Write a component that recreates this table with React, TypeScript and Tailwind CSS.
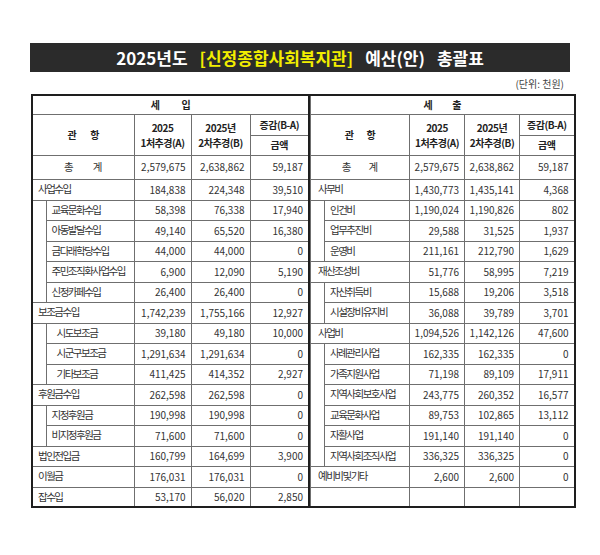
type Row = {
  label: string
  a: string
  b: string
  d: string
  sub?: boolean
  pad?: string
}

const income: Row[] = [
  { label: '사업수입', a: '184,838', b: '224,348', d: '39,510' },
  { label: '교육문화수입', a: '58,398', b: '76,338', d: '17,940', sub: true },
  { label: '아동발달수입', a: '49,140', b: '65,520', d: '16,380', sub: true },
  { label: '금다래학당수입', a: '44,000', b: '44,000', d: '0', sub: true },
  { label: '주민조직화사업수입', a: '6,900', b: '12,090', d: '5,190', sub: true },
  { label: '신정카페수입', a: '26,400', b: '26,400', d: '0', sub: true },
  { label: '보조금수입', a: '1,742,239', b: '1,755,166', d: '12,927' },
  { label: '시도보조금', a: '39,180', b: '49,180', d: '10,000', sub: true, pad: 'pl-[10px]' },
  { label: '시군구보조금', a: '1,291,634', b: '1,291,634', d: '0', sub: true, pad: 'pl-[10px]' },
  { label: '기타보조금', a: '411,425', b: '414,352', d: '2,927', sub: true, pad: 'pl-[10px]' },
  { label: '후원금수입', a: '262,598', b: '262,598', d: '0' },
  { label: '지정후원금', a: '190,998', b: '190,998', d: '0', sub: true },
  { label: '비지정후원금', a: '71,600', b: '71,600', d: '0', sub: true },
  { label: '법인전입금', a: '160,799', b: '164,699', d: '3,900' },
  { label: '이월금', a: '176,031', b: '176,031', d: '0' },
  { label: '잡수입', a: '53,170', b: '56,020', d: '2,850' },
]

const expense: Row[] = [
  { label: '사무비', a: '1,430,773', b: '1,435,141', d: '4,368' },
  { label: '인건비', a: '1,190,024', b: '1,190,826', d: '802', sub: true },
  { label: '업무추진비', a: '29,588', b: '31,525', d: '1,937', sub: true },
  { label: '운영비', a: '211,161', b: '212,790', d: '1,629', sub: true },
  { label: '재산조성비', a: '51,776', b: '58,995', d: '7,219' },
  { label: '자산취득비', a: '15,688', b: '19,206', d: '3,518', sub: true },
  { label: '시설장비유지비', a: '36,088', b: '39,789', d: '3,701', sub: true },
  { label: '사업비', a: '1,094,526', b: '1,142,126', d: '47,600' },
  { label: '사례관리사업', a: '162,335', b: '162,335', d: '0', sub: true },
  { label: '가족지원사업', a: '71,198', b: '89,109', d: '17,911', sub: true },
  { label: '지역사회보호사업', a: '243,775', b: '260,352', d: '16,577', sub: true },
  { label: '교육문화사업', a: '89,753', b: '102,865', d: '13,112', sub: true },
  { label: '자활사업', a: '191,140', b: '191,140', d: '0', sub: true },
  { label: '지역사회조직사업', a: '336,325', b: '336,325', d: '0', sub: true },
  { label: '예비비및기타', a: '2,600', b: '2,600', d: '0' },
  { label: '\u00a0', a: '\u00a0', b: '\u00a0', d: '\u00a0' },
]

const cell = 'border border-[#6f6f6f] px-0 align-middle'
const num = `${cell} text-right pr-[5px]`
const label = 'text-[10.5px] tracking-[-1.5px] whitespace-nowrap'
const head = `${cell} font-bold text-center tracking-[-0.5px] text-[#222]`

function Spread({ a, b, gap }: { a: string; b: string; gap: string }) {
  return (
    <div className={`flex justify-center ${gap}`}>
      <span>{a}</span>
      <span>{b}</span>
    </div>
  )
}

type SideProps = {
  rows: Row[]
  title: [string, string]
  left?: boolean
}

function Side({ rows, title, left }: SideProps) {
  return (
    <table
      className={`table-fixed border-collapse border-2 border-[#1e1e1e] text-[10px] leading-none ${
        left ? 'w-[278px]' : 'w-[264px] border-l-0'
      }`}
    >
      <colgroup>
        <col className="w-[14px]" />
        <col className={left ? 'w-[88px]' : 'w-[85px]'} />
        <col className={left ? 'w-[57px]' : 'w-[55px]'} />
        <col className={left ? 'w-[59px]' : 'w-[55px]'} />
        <col className={left ? 'w-[59px]' : 'w-[55px]'} />
      </colgroup>
      <thead>
        <tr className="h-[19px]">
          <td colSpan={5} className={head}>
            <Spread a={title[0]} b={title[1]} gap={left ? 'gap-[22px]' : 'gap-[20px]'} />
          </td>
        </tr>
        <tr className="h-[21px]">
          <td colSpan={2} rowSpan={2} className={head}>
            <Spread a="관" b="항" gap={left ? 'gap-[14px]' : 'gap-[13px]'} />
          </td>
          <td rowSpan={2} className={`${head} leading-[15px]`}>2025<br />1처추경(A)</td>
          <td rowSpan={2} className={`${head} leading-[15px]`}>2025년<br />2차추경(B)</td>
          <td className={head}>증감(B-A)</td>
        </tr>
        <tr className="h-[20px]">
          <td className={head}>금액</td>
        </tr>
      </thead>
      <tbody>
        <tr className="h-[24px]">
          <td colSpan={2} className={`${cell} text-center text-[10.5px]`}>
            <Spread a="총" b="계" gap={left ? 'gap-[19px]' : 'gap-[17px]'} />
          </td>
          <td className={num}>2,579,675</td>
          <td className={num}>2,638,862</td>
          <td className={num}>59,187</td>
        </tr>
        {rows.map((r, i) => (
          <tr key={i} className={i % 2 === 0 ? 'h-[21px]' : 'h-[20px]'}>
            {r.sub ? (
              <>
                <td className={`${cell} border-y-0`}></td>
                <td className={`${cell} ${r.pad ?? 'pl-[5px]'} ${label}`}>{r.label}</td>
              </>
            ) : (
              <td colSpan={2} className={`${cell} ${left ? 'pl-[5px]' : 'pl-[7px]'} ${label}`}>
                {r.label}
              </td>
            )}
            <td className={num}>{r.a}</td>
            <td className={num}>{r.b}</td>
            <td className={num}>{r.d}</td>
          </tr>
        ))}
      </tbody>
    </table>
  )
}

export default function App() {
  return (
    <div
      className="w-[600px] h-[555px] bg-white px-[30px] pt-[43px] text-[#333]"
      style={{ fontFamily: '"Noto Sans CJK KR", "Noto Sans", sans-serif' }}
    >
      <div className="h-[29px] bg-[#2b2b2b] flex items-center justify-center gap-[12px] text-[17px] font-bold leading-none text-white">
        <span>2025년도</span>
        <span className="text-[#f2ee00]">[신정종합사회복지관]</span>
        <span>예산(안)</span>
        <span>총괄표</span>
      </div>
      <div className="h-[22px] flex items-center justify-end pr-[6px] text-[10px] text-[#444]">(단위: 천원)</div>

      <div className="ml-px flex items-start">
        <Side rows={income} title={['세', '입']} left />
        <Side rows={expense} title={['세', '출']} />
      </div>
    </div>
  )
}
